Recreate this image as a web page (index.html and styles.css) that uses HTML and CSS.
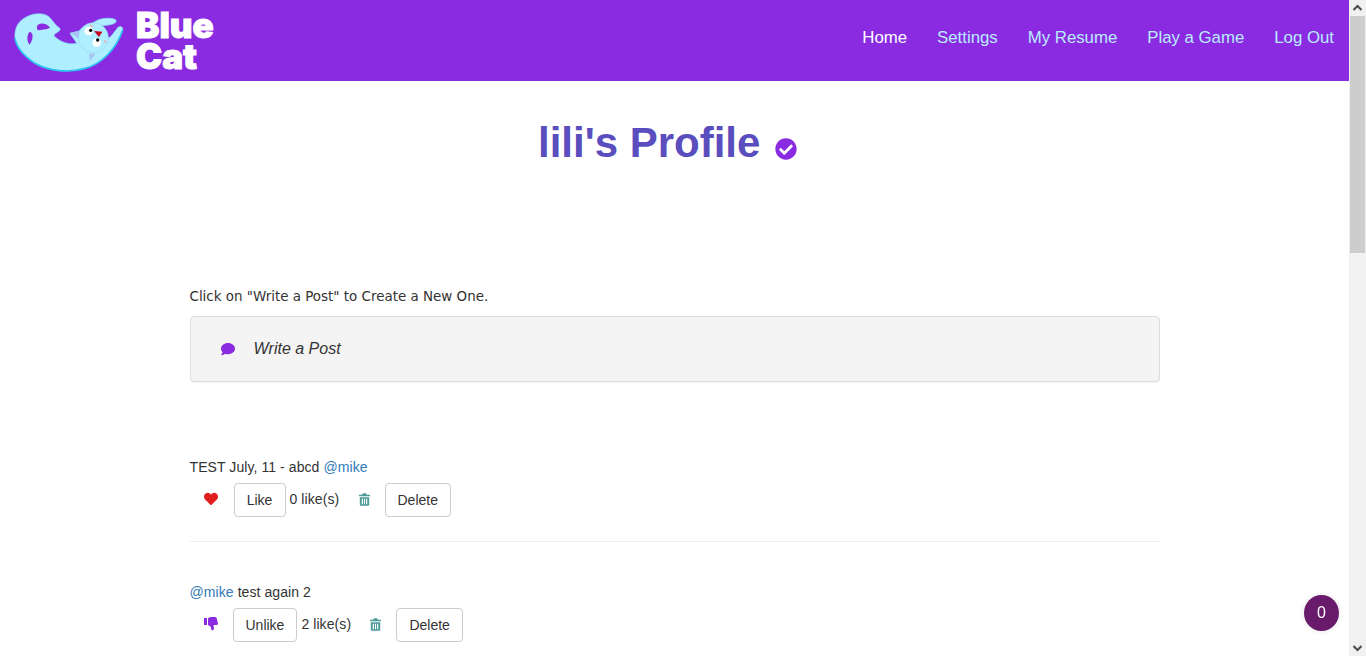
FILE: index.html
```html
<!DOCTYPE html>
<html lang="en">
<head>
    <meta charset="UTF-8">
    <title>lili's Profile</title>
    <link rel="stylesheet" href="styles.css">
</head>
<body>
    <div class="page">
        <div class="main">
            <header class="navbar">
                <a class="brand" href="#">
                    <svg class="cat" viewBox="0 0 375 216" width="125" height="72">
                        <path class="cat-body" d="M163 68C152 62 146 50 135 38C120 22 85 22 60 38C35 52 28 75 30 100C35 130 60 155 90 175C130 198 190 205 240 190C290 178 335 130 353 75C355 62 340 62 335 72C325 85 318 95 310 100C308 85 300 70 285 62C300 62 325 60 332 52C338 43 325 40 310 40C290 38 270 48 262 55C245 58 230 68 222 78L195 85C200 95 210 105 215 115C190 120 165 110 150 95C143 90 150 86 160 80C166 76 167 71 163 68Z"/>
                        <path class="cat-hole" d="M74 80C66 90 64 105 73 119C82 108 84 98 82 88C80 84 78 81 74 80Z"/>
                        <path class="cat-hole" d="M98 60C110 52 125 56 135 68C125 74 108 74 98 76C95 70 95 64 98 60Z"/>
                        <path class="cat-rim" d="M30 100C35 130 60 155 90 175C130 198 190 205 240 190C290 178 335 130 353 75"/>
                        <circle class="cat-head" cx="265" cy="98" r="45"/>
                        <path class="cat-ear" d="M195 83L222 78L222 102Z"/>
                        <path class="cat-ear" d="M252 146L272 146L254 168Z"/>
                        <circle class="cat-eye" cx="251" cy="78" r="13"/>
                        <circle class="cat-eye" cx="275" cy="113" r="13"/>
                        <circle class="cat-pupil" cx="257" cy="76" r="5"/>
                        <circle class="cat-pupil" cx="278" cy="105" r="5"/>
                        <path class="cat-nose" d="M267 78L292 80L282 96Z"/>
                        <path class="cat-blush" d="M254 60L264 66M298 106L304 114"/>
                    </svg>
                    <span class="brand-name">Blue<br>Cat</span>
                </a>
                <nav class="nav">
                    <a class="active" href="#">Home</a>
                    <a href="#">Settings</a>
                    <a href="#">My Resume</a>
                    <a href="#">Play a Game</a>
                    <a href="#">Log Out</a>
                </nav>
            </header>

            <div class="container">
                <h1>lili's Profile
                    <svg class="verified" viewBox="0 0 512 512"><path d="M504 256c0 136.967-111.033 248-248 248S8 392.967 8 256 119.033 8 256 8s248 111.033 248 248zM227.314 387.314l184-184c6.248-6.248 6.248-16.379 0-22.627l-22.627-22.627c-6.248-6.249-16.379-6.249-22.628 0L216 308.118l-70.059-70.059c-6.248-6.248-16.379-6.248-22.628 0l-22.627 22.627c-6.248 6.248-6.248 16.379 0 22.627l104 104c6.249 6.249 16.379 6.249 22.628.001z"/></svg>
                </h1>

                <p class="hint">Click on "Write a Post" to Create a New One.</p>
                <div class="write-post">
                    <svg class="icon-comment" viewBox="0 0 512 512"><path d="M256 32C114.6 32 0 125.1 0 240c0 49.6 21.4 95 57 130.7C44.5 421.1 2.7 466 2.2 466.5c-2.2 2.3-2.8 5.7-1.5 8.7S4.8 480 8 480c66.3 0 116-31.8 140.6-51.4 32.7 12.3 69 19.4 107.4 19.4 141.4 0 256-93.1 256-208S397.4 32 256 32z"/></svg>
                    <em>Write a Post</em>
                </div>

                <div class="posts">
                    <div class="post">
                        <p class="post-text">TEST July, 11 - abcd <a href="#">@mike</a></p>
                        <div class="post-actions">
                            <svg class="icon-heart" viewBox="0 0 512 512"><path d="M462.3 62.6C407.5 15.9 326 24.3 275.7 76.2L256 96.5l-19.7-20.3C186.1 24.3 104.5 15.9 49.7 62.6c-62.8 53.6-66.1 149.8-9.9 207.9l193.5 199.8c12.5 12.9 32.8 12.9 45.3 0l193.5-199.8c56.3-58.1 53-154.3-9.8-207.9z"/></svg>
                            <button class="btn-like">Like</button>
                            <span class="likes">0 like(s)</span>
                            <svg class="icon-trash" viewBox="0 0 14 16"><path fill-rule="evenodd" d="M5 0H9L10 2H14V4H0V2H4ZM1 5H13V14.5Q13 16 11.5 16H2.5Q1 16 1 14.5ZM3.5 7V14H5V7ZM6.3 7V14H7.7V7ZM9 7V14H10.5V7Z"/></svg>
                            <button>Delete</button>
                        </div>
                    </div>

                    <div class="post">
                        <p class="post-text"><a href="#">@mike</a> test again 2</p>
                        <div class="post-actions">
                            <svg class="icon-thumb" viewBox="0 0 14 14"><path d="M0 1H3V8H0ZM4 1.5C5 .5 6 0 7.5 0H11Q12.5 0 12.7 1.3L14 6.5Q14 8 12.5 8H9.5L10 11Q10 13 8.5 13.5Q7.5 13.5 7.3 12L6.5 9.5L4 8Z"/></svg>
                            <button>Unlike</button>
                            <span class="likes">2 like(s)</span>
                            <svg class="icon-trash" viewBox="0 0 14 16"><path fill-rule="evenodd" d="M5 0H9L10 2H14V4H0V2H4ZM1 5H13V14.5Q13 16 11.5 16H2.5Q1 16 1 14.5ZM3.5 7V14H5V7ZM6.3 7V14H7.7V7ZM9 7V14H10.5V7Z"/></svg>
                            <button>Delete</button>
                        </div>
                    </div>
                </div>
            </div>
        </div>

        <div class="scrollbar">
            <svg class="arrow" viewBox="0 0 17 16"><path d="M4.5 10L8.5 6L12.5 10"/></svg>
            <div class="scroll-track"><div class="scroll-thumb"></div></div>
            <svg class="arrow" viewBox="0 0 17 16"><path d="M4.5 6L8.5 10L12.5 6"/></svg>
        </div>
    </div>

    <div class="chat-badge">0</div>
</body>
</html>
```

FILE: styles.css
```css
html, body {
    height: 100%;
    margin: 0;
    overflow: hidden;
}
body {
    font-family: 'Liberation Sans', Arial, sans-serif;
    font-size: 14px;
    line-height: 20px;
    color: #333;
    background-color: white;
}
a {
    text-decoration: none;
    color: #337ab7;
}
.page {
    display: flex;
    height: 100vh;
}
.main {
    flex: 1;
    min-width: 0;
    overflow: hidden;
}
.navbar {
    height: 81px;
    background-color: #8a2be2;
    display: flex;
    justify-content: space-between;
    align-items: center;
    padding: 0 15px 0 5px;
}
.brand {
    display: flex;
    align-items: center;
    color: white;
}
.cat {
    display: block;
}
.cat-body {
    fill: #aeeeff;
    stroke: #7fdcf5;
    stroke-width: 2;
}
.cat-hole {
    fill: #8a2be2;
}
.cat-rim {
    fill: none;
    stroke: #29c4ee;
    stroke-width: 5;
}
.cat-head {
    fill: #aeeeff;
    stroke: #8fd6e8;
    stroke-width: 1.5;
}
.cat-ear {
    fill: #a9c4f4;
}
.cat-eye {
    fill: white;
}
.cat-pupil {
    fill: black;
}
.cat-nose {
    fill: #c3001c;
}
.cat-blush {
    fill: none;
    stroke: #f5a9a9;
    stroke-width: 4;
}
.brand-name {
    margin-left: 6px;
    font-family: Inter, 'Liberation Sans', sans-serif;
    font-weight: 900;
    font-size: 35px;
    line-height: 31px;
    -webkit-text-stroke: 1px white;
    color: white;
}
.nav {
    display: flex;
    gap: 30px;
    font-size: 16.8px;
    padding-bottom: 6px;
}
.nav a {
    color: #b9ecff;
}
.nav a.active {
    color: white;
}
.container {
    width: 970px;
    margin: 0 auto;
}
h1 {
    margin: 38px 14px 0 0;
    text-align: center;
    font-size: 42px;
    line-height: 48px;
    font-weight: bold;
    color: #5a4dbd;
}
.verified {
    width: 22px;
    height: 22px;
    margin-left: 3px;
    vertical-align: -3px;
    fill: #8a2be2;
}
.hint {
    margin: 120px 0 0;
    font-family: 'DejaVu Sans', sans-serif;
    font-size: 13.45px;
    line-height: 20px;
}
.write-post {
    margin-top: 9px;
    height: 66px;
    box-sizing: border-box;
    display: flex;
    align-items: center;
    padding-left: 30px;
    background-color: #f4f4f4;
    border: 1px solid #ddd;
    border-radius: 4px;
    box-shadow: 0 1px 1px rgba(0,0,0,0.05);
    font-size: 16px;
}
.icon-comment {
    width: 14px;
    height: 14px;
    fill: #8a2be2;
    margin-right: 19px;
}
.posts {
    margin-top: 75px;
    letter-spacing: 0.08px;
}
.post {
    padding-bottom: 24px;
    border-bottom: 1px solid #eee;
}
.post + .post {
    padding-top: 40px;
    border-bottom: none;
}
.post-text {
    margin: 0;
}
.post-actions {
    display: flex;
    align-items: center;
    margin-top: 6px;
}
button {
    height: 34px;
    padding: 6px 12px;
    background-color: white;
    color: #333;
    border: 1px solid #ccc;
    border-radius: 4px;
    font-family: inherit;
    font-size: 14px;
}
.btn-like {
    width: 52px;
}
.likes {
    width: 50px;
    white-space: nowrap;
    margin: 0 0 2px 4px;
}
.icon-heart {
    width: 14px;
    height: 14px;
    margin: 0 16px 2px 14px;
    fill: #e21f1f;
}
.icon-thumb {
    width: 14px;
    height: 14px;
    margin: 0 15px 2px 14px;
    fill: #8a2be2;
}
.icon-trash {
    width: 11px;
    height: 13px;
    margin: 0 15px 2px 19px;
    fill: #4e9a9a;
}
.scrollbar {
    width: 17px;
    display: flex;
    flex-direction: column;
    background-color: #f1f1f1;
}
.arrow {
    width: 17px;
    height: 16px;
    flex: none;
    fill: none;
    stroke: #505050;
    stroke-width: 2.2;
}
.scroll-track {
    flex: 1;
}
.scroll-thumb {
    height: 237px;
    margin: 0 1px;
    background-color: #cdcdcd;
}
.chat-badge {
    position: fixed;
    left: 1304px;
    top: 595px;
    width: 35px;
    height: 36px;
    border-radius: 50%;
    background-color: #6a1a6b;
    color: white;
    font-size: 16px;
    line-height: 36px;
    text-align: center;
    box-shadow: 0 0 6px rgba(0,0,0,0.1);
}
```
